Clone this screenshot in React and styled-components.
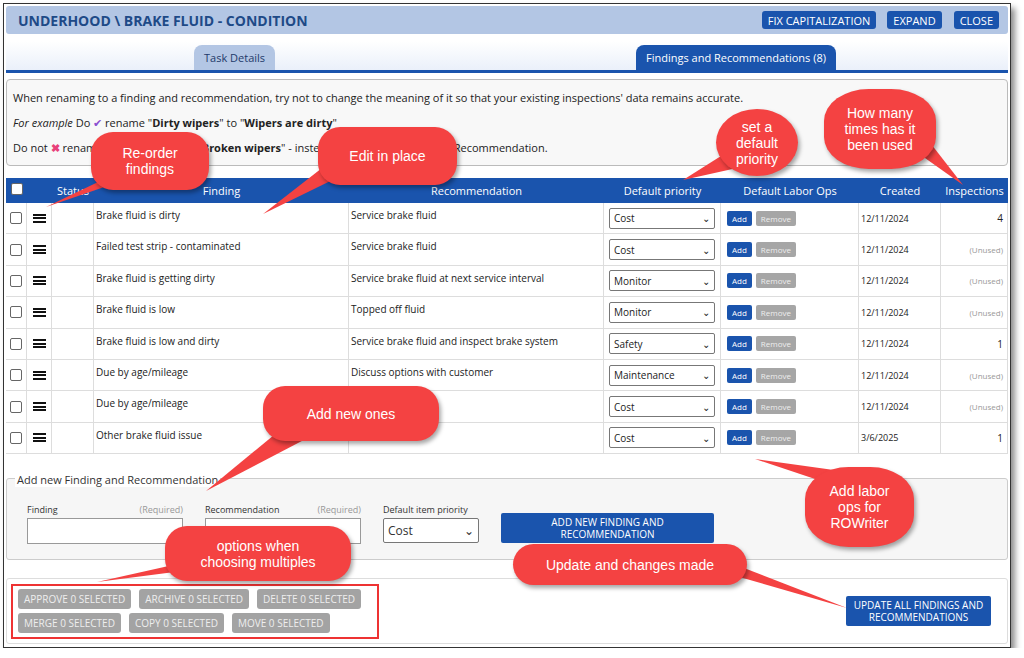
import React from "react";
import styled, { createGlobalStyle } from "styled-components";

const Global = createGlobalStyle`
  html,body{margin:0;background:#fff;font-family:"Open Sans","Noto Sans",sans-serif;}
`;
const Frame = styled.div`
  position:relative;margin:3px 0 0 3px;width:1008px;height:645px;border:1px solid #333;
  box-shadow:4px 5px 6px rgba(0,0,0,.45);background:#fff;box-sizing:border-box;padding:2px;
  display:flex;flex-direction:column;overflow:hidden;
`;
const Header = styled.div`
  height:28px;background:#b3c6e4;border-radius:3px;display:flex;align-items:center;padding:0 9px 0 12px;
  color:#1e4a87;font-weight:700;font-size:14px;
`;
const Spacer = styled.div`flex:1;`;
const HBtn = styled.button`
  background:#1a54ad;color:#fff;border:none;border-radius:3px;font-size:11px;font-family:inherit;
  height:18px;padding:0 6px;margin-left:${p=>p.$ml||8}px;
`;
const TabBar = styled.div`
  margin-top:7px;height:32px;background:linear-gradient(#fff,#eaf0fa);border-radius:4px 4px 0 0;
  border-bottom:3px solid #1a54ad;display:flex;align-items:flex-end;box-sizing:border-box;
`;
const Tab = styled.div`
  height:25px;margin-left:${p=>p.$ml}px;padding:0 10px;border-radius:8px 8px 0 0;display:flex;align-items:center;
  font-size:11px;background:${p=>p.$active?"#1a54ad":"#b3c6e4"};color:${p=>p.$active?"#fff":"#1e3a6a"};
`;
const Info = styled.div`
  margin-top:6px;height:87px;border:1px solid #bbb;border-radius:4px;background:#f8f8f8;box-sizing:border-box;
  padding:11px 6px;font-size:11px;color:#222;display:flex;flex-direction:column;gap:11px;
`;
const Line = styled.div`line-height:14px;`;
const Table = styled.div`margin-top:12px;`;
const cols = "21px 25px 42px 255px 255px 117px 138px 82px 1fr";
const HeadRow = styled.div`
  display:grid;grid-template-columns:${cols};height:25px;background:#1a54ad;color:#fff;font-size:11px;align-items:center;
  & > div{text-align:center;}
`;
const Row = styled.div`
  display:grid;grid-template-columns:${cols};height:31.4px;border-bottom:1px solid #ddd;font-size:10px;color:#222;box-sizing:border-box;
  & > div{border-right:1px solid #ddd;height:100%;box-sizing:border-box;}
`;
const Cell = styled.div`
  display:flex;align-items:${p=>p.$top?"flex-start":"center"};justify-content:${p=>p.$j||"flex-start"};
  padding:${p=>p.$top?"5px 2px 0":"0 2px"};
`;
const Check = styled.span`width:10px;height:10px;border:1px solid #666;border-radius:2px;background:#fff;display:inline-block;`;
const Burger = styled.span`
  width:13px;height:9px;border-top:2px solid #111;border-bottom:2px solid #111;position:relative;box-sizing:border-box;
  &:after{content:"";position:absolute;left:0;right:0;top:1.5px;height:2px;background:#111;}
`;
const Sel = styled.div`
  width:106px;height:21px;border:1px solid #777;border-radius:2px;display:flex;align-items:center;justify-content:space-between;
  padding:0 4px;box-sizing:border-box;font-size:10px;background:#fff;
`;
const SmBtn = styled.span`
  font-size:8px;color:${p=>p.$gray?"#eee":"#fff"};background:${p=>p.$gray?"#a6a6a6":"#1a54ad"};border-radius:2px;padding:2px 5px;margin-left:4px;
`;
const Fieldset = styled.div`
  margin-top:24px;height:82px;border:1px solid #ccc;border-radius:3px;background:#f6f6f6;position:relative;box-sizing:border-box;
  display:flex;align-items:flex-start;padding:24px 0 0 20px;gap:22px;
`;
const Legend = styled.div`position:absolute;top:-7px;left:8px;background:#fff;padding:0 2px;font-size:11px;color:#333;`;
const Field = styled.div`display:flex;flex-direction:column;width:${p=>p.$w}px;font-size:9px;color:#333;`;
const Lbl = styled.div`display:flex;justify-content:space-between;margin-bottom:2px;& i{color:#999;font-style:normal;}`;
const Input = styled.div`height:24px;border:1px solid #999;background:#fff;`;
const BigBtn = styled.div`
  width:${p=>p.$w}px;height:30px;background:#1a54ad;color:#fff;font-size:10px;text-align:center;display:flex;align-items:center;justify-content:center;
  border-radius:2px;line-height:12px;
`;
const Bottom = styled.div`
  margin-top:18px;height:64px;border:1px solid #ddd;border-radius:3px;display:flex;align-items:center;padding:0 16px 0 4px;
`;
const BulkBox = styled.div`
  border:2px solid #e33;width:368px;height:55px;box-sizing:border-box;display:flex;flex-wrap:wrap;align-content:center;gap:4px 8px;padding:0 5px;
`;
const Gray = styled.span`background:#a3a3a3;color:#eee;font-size:10px;border-radius:3px;padding:3px 6px;`;
const Bubble = styled.div`
  position:absolute;left:${p=>p.$x}px;top:${p=>p.$y}px;width:${p=>p.$w}px;height:${p=>p.$h}px;background:#f44242;color:#fff;
  border-radius:${p=>p.$r||"22px"};display:flex;align-items:center;justify-content:center;text-align:center;
  font-family:"Liberation Sans",Arial,sans-serif;font-size:14px;line-height:16px;box-shadow:2px 3px 4px rgba(0,0,0,.35);
`;
const Overlay = styled.svg`position:absolute;left:0;top:0;pointer-events:none;`;

const rows = [
  ["Brake fluid is dirty","Service brake fluid","Cost","12/11/2024","4"],
  ["Failed test strip - contaminated","Service brake fluid","Cost","12/11/2024",""],
  ["Brake fluid is getting dirty","Service brake fluid at next service interval","Monitor","12/11/2024",""],
  ["Brake fluid is low","Topped off fluid","Monitor","12/11/2024",""],
  ["Brake fluid is low and dirty","Service brake fluid and inspect brake system","Safety","12/11/2024","1"],
  ["Due by age/mileage","Discuss options with customer","Maintenance","12/11/2024",""],
  ["Due by age/mileage","","Cost","12/11/2024",""],
  ["Other brake fluid issue","s below","Cost","3/6/2025","1"],
];

const tails = [
  "120,170 150,170 45,206",
  "330,160 360,165 262,213",
  "720,155 745,165 682,179",
  "900,140 920,130 962,184",
  "290,420 320,430 205,490",
  "820,480 840,470 754,458",
  "190,560 220,565 96,581",
  "700,565 725,560 846,607",
];

export default function App(){
  return (<>
    <Global/>
    <Frame>
      <Header>UNDERHOOD \ BRAKE FLUID - CONDITION<Spacer/><HBtn>FIX CAPITALIZATION</HBtn><HBtn $ml={11}>EXPAND</HBtn><HBtn $ml={12}>CLOSE</HBtn></Header>
      <TabBar><Tab $ml={188}>Task Details</Tab><Tab $active $ml={361}>Findings and Recommendations (8)</Tab></TabBar>
      <Info>
        <Line>When renaming to a finding and recommendation, try not to change the meaning of it so that your existing inspections' data remains accurate.</Line>
        <Line><i>For example</i> Do <span style={{color:"#8a4fd0"}}>✔</span> rename "<b>Dirty wipers</b>" to "<b>Wipers are dirty</b>"</Line>
        <Line>Do not <span style={{color:"#e8407a",fontWeight:700}}>✖</span> rename "<b>Dirty wipers</b>" to "<b>Broken wipers</b>" - instead add a new Finding and Recommendation.</Line>
      </Info>
      <Table>
        <HeadRow><div><Check/></div><div/><div>Status</div><div>Finding</div><div>Recommendation</div><div>Default priority</div><div>Default Labor Ops</div><div>Created</div><div>Inspections</div></HeadRow>
        {rows.map((r,i)=>(
          <Row key={i}>
            <Cell $j="center"><Check/></Cell>
            <Cell $j="center"><Burger/></Cell>
            <Cell/>
            <Cell $top>{r[0]}</Cell>
            <Cell $top>{r[1]}</Cell>
            <Cell $j="center"><Sel>{r[2]}<span>⌄</span></Sel></Cell>
            <Cell><SmBtn>Add</SmBtn><SmBtn $gray>Remove</SmBtn></Cell>
            <Cell style={{fontSize:9}}>{r[3]}</Cell>
            <Cell $j="flex-end" style={{paddingRight:4,fontSize:r[4]?10:8,color:r[4]?"#222":"#999"}}>{r[4]||"(Unused)"}</Cell>
          </Row>
        ))}
      </Table>
      <Fieldset>
        <Legend>Add new Finding and Recommendation</Legend>
        <Field $w={156}><Lbl>Finding<i>(Required)</i></Lbl><Input/></Field>
        <Field $w={156}><Lbl>Recommendation<i>(Required)</i></Lbl><Input/></Field>
        <Field $w={96}><Lbl>Default item priority</Lbl><Sel style={{width:96,height:25,fontSize:12}}>Cost<span>⌄</span></Sel></Field>
        <div style={{paddingTop:10}}><BigBtn $w={213}>ADD NEW FINDING AND<br/>RECOMMENDATION</BigBtn></div>
      </Fieldset>
      <Bottom>
        <BulkBox>
          <Gray>APPROVE 0 SELECTED</Gray><Gray>ARCHIVE 0 SELECTED</Gray><Gray>DELETE 0 SELECTED</Gray>
          <Gray>MERGE 0 SELECTED</Gray><Gray>COPY 0 SELECTED</Gray><Gray>MOVE 0 SELECTED</Gray>
        </BulkBox>
        <Spacer/>
        <BigBtn $w={145}>UPDATE ALL FINDINGS AND<br/>RECOMMENDATIONS</BigBtn>
      </Bottom>
      <Overlay width="1008" height="645" viewBox="3 3 1008 645">
        {tails.map((t,i)=><polygon key={i} points={t} fill="#f44242"/>)}
      </Overlay>
      <Bubble $x={87} $y={128} $w={118} $h={58}>Re-order<br/>findings</Bubble>
      <Bubble $x={314} $y={123} $w={139} $h={58}>Edit in place</Bubble>
      <Bubble $x={712} $y={105} $w={82} $h={67} $r="50%">set a<br/>default<br/>priority</Bubble>
      <Bubble $x={820} $y={85} $w={112} $h={80} $r="40%">How many<br/>times has it<br/>been used</Bubble>
      <Bubble $x={259} $y={382} $w={176} $h={55}>Add new ones</Bubble>
      <Bubble $x={801} $y={463} $w={109} $h={80} $r="40%">Add labor<br/>ops for<br/>ROWriter</Bubble>
      <Bubble $x={161} $y={522} $w={186} $h={55}>options when<br/>choosing multiples</Bubble>
      <Bubble $x={509} $y={540} $w={234} $h={41}>Update and changes made</Bubble>
    </Frame>
  </>);
}
